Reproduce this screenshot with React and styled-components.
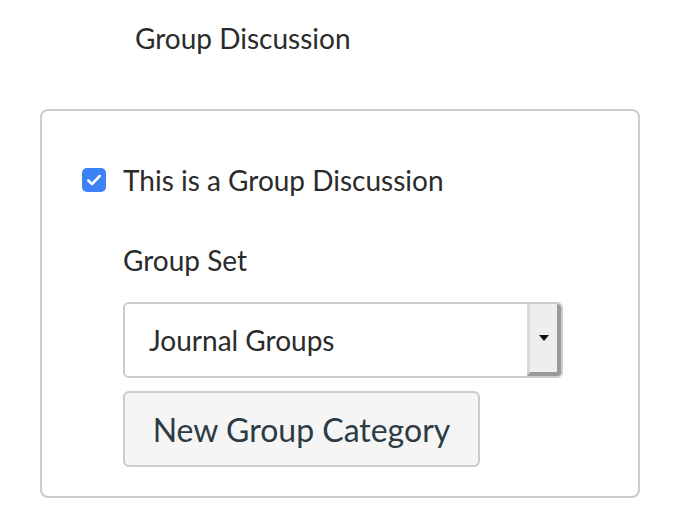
import styled, { createGlobalStyle } from 'styled-components';

const GlobalStyle = createGlobalStyle`
  body {
    margin: 0;
    background: #fff;
    font-family: Lato, "Open Sans", sans-serif;
    color: #2d3b45;
  }
`;

const Page = styled.div`
  padding: 21px 0 0 40px;
`;

const Title = styled.h2`
  margin: 0 0 54px 95px;
  font-size: 28px;
  font-weight: 400;
  line-height: 34px;
  color: #2b2b2b;
`;

const Card = styled.div`
  box-sizing: border-box;
  width: 600px;
  height: 389px;
  border: 2px solid #cccccc;
  border-radius: 8px;
  padding: 52px 0 0 40px;
`;

const CheckRow = styled.label`
  display: flex;
  align-items: center;
  gap: 17px;
  font-size: 28px;
  line-height: 34px;
  color: #2b2b2b;
`;

const Box = styled.span`
  width: 24px;
  height: 24px;
  border-radius: 5px;
  background: #3b82f6;
  display: flex;
  align-items: center;
  justify-content: center;
`;

const Fields = styled.div`
  padding-left: 41px;
`;

const FieldLabel = styled.div`
  margin-top: 46px;
  font-size: 28px;
  line-height: 34px;
  color: #2b2b2b;
`;

const Select = styled.div`
  box-sizing: border-box;
  margin-top: 25px;
  width: 440px;
  height: 76px;
  border: 2px solid #cccccc;
  border-radius: 6px;
  display: flex;
  align-items: stretch;
  overflow: hidden;
`;

const SelectText = styled.span`
  flex: 1;
  display: flex;
  align-items: center;
  padding-left: 24px;
  font-size: 28px;
  color: #2b2b2b;
`;

const Spinner = styled.span`
  width: 27px;
  background: #eeeeee;
  border-left: 3px solid #d8d8d8;
  border-right: 4px solid #9a9a9a;
  border-bottom: 4px solid #9a9a9a;
  display: flex;
  align-items: center;
  justify-content: center;
`;

const Button = styled.button`
  box-sizing: border-box;
  margin-top: 13px;
  width: 357px;
  height: 76px;
  background: #f5f5f5;
  border: 2px solid #c7cdd1;
  border-radius: 6px;
  font-family: Lato, "Open Sans", sans-serif;
  font-size: 32px;
  color: #2d3b45;
  padding: 0;
`;

export default function App() {
  return (
    <Page>
      <GlobalStyle />
      <Title>Group Discussion</Title>
      <Card>
        <CheckRow>
          <Box>
            <svg width="18" height="18" viewBox="0 0 16 16">
              <path d="M3 8.5l3.2 3.2L13 4.5" fill="none" stroke="#fff" strokeWidth="2.4" strokeLinecap="round" strokeLinejoin="round" />
            </svg>
          </Box>
          This is a Group Discussion
        </CheckRow>
        <Fields>
          <FieldLabel>Group Set</FieldLabel>
          <Select>
            <SelectText>Journal Groups</SelectText>
            <Spinner>
              <svg width="10" height="6" viewBox="0 0 10 6">
                <path d="M0 0h10L5 6z" fill="#111" />
              </svg>
            </Spinner>
          </Select>
          <Button>New Group Category</Button>
        </Fields>
      </Card>
    </Page>
  );
}
